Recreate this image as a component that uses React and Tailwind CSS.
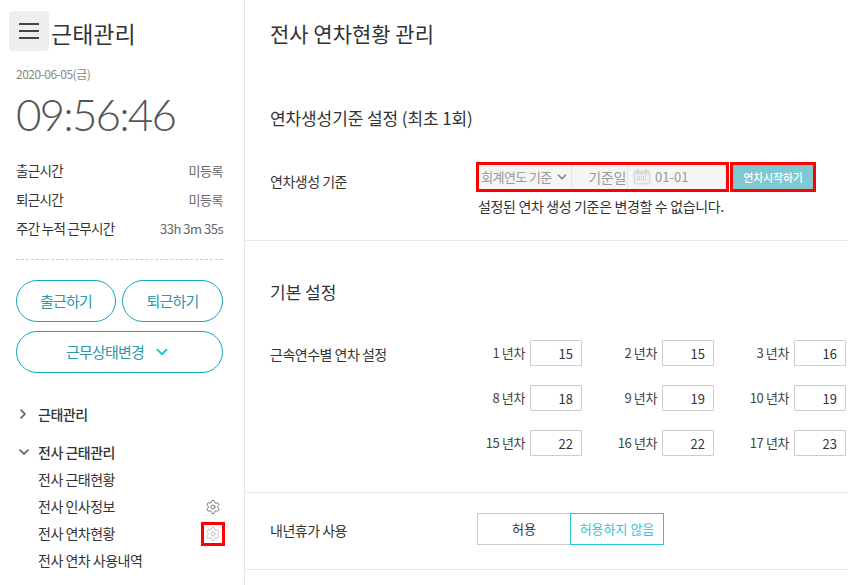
import { ChevronDown, ChevronRight, Settings } from 'lucide-react';

const font = { fontFamily: '"Noto Sans CJK KR", sans-serif' };

const yearRows = [
  [['1 년차', 15], ['2 년차', 15], ['3 년차', 16]],
  [['8 년차', 18], ['9 년차', 19], ['10 년차', 19]],
  [['15 년차', 22], ['16 년차', 22], ['17 년차', 23]],
];

function StatRow({ label, value }) {
  return (
    <div className="flex justify-between items-center h-[29px]">
      <span className="text-[#333] text-[13.5px] tracking-[-0.7px]">{label}</span>
      <span className="text-[#666] text-[13px] tracking-[-0.5px]">{value}</span>
    </div>
  );
}

function Sidebar() {
  return (
    <aside className="relative w-[245px] h-[585px] shrink-0 border-r border-[#e5e5e5] pl-4 pr-[21px] overflow-hidden">
      <button className="absolute left-[9px] top-[11px] w-10 h-10 rounded bg-[#eee] flex flex-col items-center justify-center gap-[5px]">
        <span className="block w-5 h-[2px] bg-[#444]" />
        <span className="block w-5 h-[2px] bg-[#444]" />
        <span className="block w-5 h-[2px] bg-[#444]" />
      </button>
      <h1 className="pl-[35px] pt-[17px] h-[62px] text-[23px] leading-[32px] text-[#333] font-normal">근태관리</h1>
      <div className="text-[12px] leading-[18px] text-[#888] tracking-[-0.5px] mt-[3px]">2020-06-05(금)</div>
      <div className="font-['Lato'] font-light text-[44px] leading-[54px] text-[#555] mt-[4px] tracking-[-1.9px]">09:56:46</div>
      <div className="mt-[15px]">
        <StatRow label="출근시간" value="미등록" />
        <StatRow label="퇴근시간" value="미등록" />
        <StatRow label="주간 누적 근무시간" value="33h 3m 35s" />
      </div>
      <div className="mt-[16px] border-t border-dashed border-[#ccc]" />
      <div className="flex gap-[6px] mt-[20px]">
        <button className="w-[100px] h-[42px] rounded-full border border-[#14a8bd] text-[#2a9aaa] text-[15px] tracking-[-0.8px]">출근하기</button>
        <button className="w-[101px] h-[42px] rounded-full border border-[#14a8bd] text-[#2a9aaa] text-[15px] tracking-[-0.8px]">퇴근하기</button>
      </div>
      <button className="w-[207px] h-[42px] mt-[9px] pr-[2px] rounded-full border border-[#14a8bd] text-[#2a9aaa] text-[15px] tracking-[-0.8px] flex items-center justify-center gap-[9px]">
        근무상태변경
        <ChevronDown size={18} strokeWidth={2.4} className="text-[#22c4d4]" />
      </button>
      <nav className="mt-[28px] text-[14px] tracking-[-0.5px] text-[#333]">
        <div className="flex items-center h-[26px] font-medium">
          <ChevronRight size={16} strokeWidth={2.4} className="ml-[-1px] mr-[7px] text-[#555]" />
          근태관리
        </div>
        <div className="flex items-center h-[26px] mt-[12px] font-medium">
          <ChevronDown size={16} strokeWidth={2.4} className="ml-[0px] mr-[6px] text-[#555]" />
          전사 근태관리
        </div>
        <div className="pl-[22px] pt-[1px]">
          <div className="h-[27px] flex items-center">전사 근태현황</div>
          <div className="h-[27px] flex items-center justify-between">
            전사 인사정보
            <Settings size={16} strokeWidth={1.3} className="text-[#666] mr-[2px]" />
          </div>
          <div className="h-[27px] flex items-center justify-between">
            전사 연차현황
            <span className="w-6 h-6 border-[3px] border-[#f00] flex items-center justify-center mr-[-2px]">
              <Settings size={16} strokeWidth={1.3} className="text-[#bbb]" />
            </span>
          </div>
          <div className="h-[27px] flex items-center">전사 연차 사용내역</div>
        </div>
      </nav>
    </aside>
  );
}

function Main() {
  return (
    <main className="flex-1 min-w-0 h-[585px] overflow-hidden text-[#333]">
      <h1 className="pl-[25px] pt-[17px] h-[63px] text-[21px] leading-[32px] font-normal">전사 연차현황 관리</h1>

      <section className="h-[178px] border-b border-[#e8e8e8] pl-[25px]">
        <h2 className="pt-[41px] text-[17px] leading-[28px] tracking-[-0.1px] font-normal">연차생성기준 설정 (최초 1회)</h2>
        <div className="flex mt-[30px]">
          <div className="w-[206px] text-[14px] tracking-[-0.5px] leading-[38px]">연차생성 기준</div>
          <div>
            <div className="flex gap-[1px]">
              <div className="w-[253px] h-[30px] border-[3px] border-[#f00] bg-[#f5f5f5] flex items-center text-[13px] text-[#999]">
                <span className="w-[93px] h-full flex items-center justify-center gap-[3px] border-r border-[#e4e4e4] tracking-[-0.6px]">
                  회계연도 기준
                  <ChevronDown size={14} strokeWidth={3} className="text-[#888]" />
                </span>
                <span className="w-[56px] h-full flex items-center justify-end pr-[1px] border-r border-[#e4e4e4] text-[14px] tracking-[-0.3px]">기준일</span>
                <span className="flex items-center gap-[4px] pl-[5px]">
                  <svg width="18" height="16" viewBox="0 0 18 16">
                    <rect x="0.5" y="1.5" width="17" height="14" rx="2" fill="#ddd" />
                    <rect x="2" y="5.5" width="14" height="8.5" fill="#eee" />
                    <rect x="4" y="0" width="1.5" height="3" fill="#ccc" />
                    <rect x="12.5" y="0" width="1.5" height="3" fill="#ccc" />
                    <path d="M4 8h10M4 10.5h10" stroke="#bbb" strokeWidth="1" strokeDasharray="1 1" />
                  </svg>
                  01-01
                </span>
              </div>
              <button className="w-[86px] h-[30px] border-[3px] border-[#f00] bg-[#7fc8d2] text-white text-[11px] font-medium tracking-[-0.2px]">연차시작하기</button>
            </div>
            <p className="pl-[2px] mt-[4px] text-[14px] leading-[20px] tracking-[-0.35px]">설정된 연차 생성 기준은 변경할 수 없습니다.</p>
          </div>
        </div>
      </section>

      <section className="h-[252px] border-b border-[#e8e8e8] pl-[25px]">
        <h2 className="pt-[37px] text-[17px] leading-[28px] font-normal">기본 설정</h2>
        <div className="flex mt-[34px]">
          <div className="w-[180px] shrink-0 text-[14px] tracking-[-0.5px] leading-[28px]">근속연수별 연차 설정</div>
          <div className="flex flex-col gap-[19px]">
            {yearRows.map((row, i) => (
              <div key={i} className="flex">
                {row.map(([label, val]) => (
                  <div key={label} className="w-[132px] shrink-0 flex items-center justify-end gap-[5px]">
                    <span className="text-[13px] tracking-[-0.4px] text-[#444]">{label}</span>
                    <span className="w-[52px] h-[26px] border border-[#ccc] rounded-[1px] text-right pr-[8px] text-[13px] leading-[26px]">{val}</span>
                  </div>
                ))}
              </div>
            ))}
          </div>
        </div>
      </section>

      <section className="h-[77px] border-b border-[#e8e8e8] pl-[25px] pb-[4px] flex items-center">
        <div className="w-[207px] pt-[2px] text-[14px] tracking-[-0.5px]">내년휴가 사용</div>
        <div className="flex text-[13px]">
          <span className="w-[94px] h-[32px] border border-[#ccc] flex items-center justify-center">허용</span>
          <span className="w-[94px] h-[32px] ml-[-1px] border border-[#26c6d8] text-[#30c4d6] flex items-center justify-center">허용하지 않음</span>
        </div>
      </section>
    </main>
  );
}

export default function App() {
  return (
    <div className="flex w-[848px] h-[585px] overflow-hidden bg-white" style={font}>
      <Sidebar />
      <Main />
    </div>
  );
}
